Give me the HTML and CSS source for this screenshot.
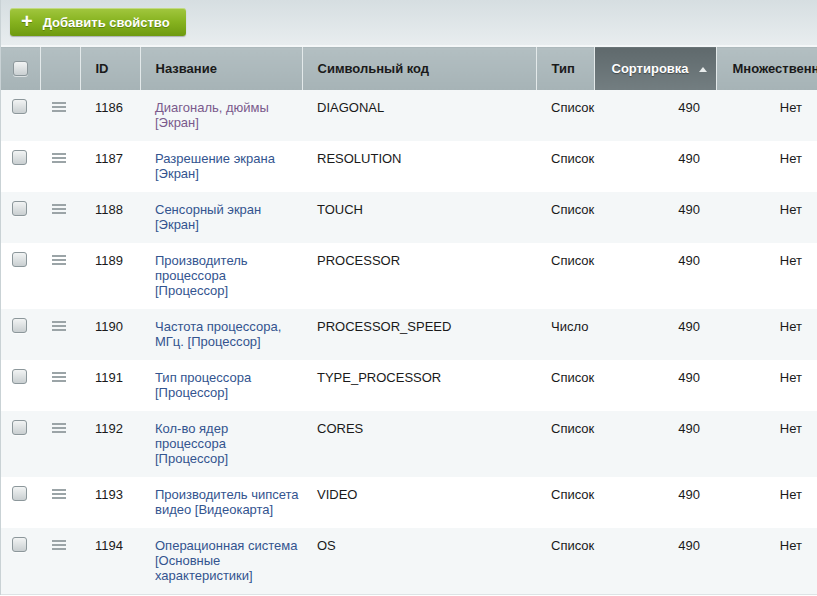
FILE: index.html
```html
<!DOCTYPE html>
<html lang="ru">
<head>
<meta charset="utf-8">
<title>Свойства</title>
<link rel="stylesheet" href="styles.css">
</head>
<body>
<div class="page">
  <div class="toolbar">
    <span class="btn-add"><span class="btn-plus">+</span>Добавить свойство</span>
  </div>
  <table class="list">
    <colgroup>
      <col class="c-chk"><col class="c-drag"><col class="c-id"><col class="c-name"><col class="c-code"><col class="c-type"><col class="c-sort"><col class="c-mult">
    </colgroup>
    <thead>
      <tr>
        <th class="chk"><span class="checkbox"></span></th>
        <th></th>
        <th>ID</th>
        <th>Название</th>
        <th>Символьный код</th>
        <th>Тип</th>
        <th class="sorted">Сортировка <span class="arrow"></span></th>
        <th class="mult">Множественное</th>
      </tr>
    </thead>
    <tbody>
      <tr class="odd">
        <td class="chk"><span class="checkbox"></span></td>
        <td class="drag"><span class="handle"></span></td>
        <td>1186</td>
        <td class="name"><a class="visited">Диагональ, дюймы [Экран]</a></td>
        <td>DIAGONAL</td>
        <td>Список</td>
        <td class="num">490</td>
        <td class="num">Нет</td>
      </tr>
      <tr>
        <td class="chk"><span class="checkbox"></span></td>
        <td class="drag"><span class="handle"></span></td>
        <td>1187</td>
        <td class="name"><a>Разрешение экрана [Экран]</a></td>
        <td>RESOLUTION</td>
        <td>Список</td>
        <td class="num">490</td>
        <td class="num">Нет</td>
      </tr>
      <tr class="odd">
        <td class="chk"><span class="checkbox"></span></td>
        <td class="drag"><span class="handle"></span></td>
        <td>1188</td>
        <td class="name"><a>Сенсорный экран [Экран]</a></td>
        <td>TOUCH</td>
        <td>Список</td>
        <td class="num">490</td>
        <td class="num">Нет</td>
      </tr>
      <tr>
        <td class="chk"><span class="checkbox"></span></td>
        <td class="drag"><span class="handle"></span></td>
        <td>1189</td>
        <td class="name"><a>Производитель процессора [Процессор]</a></td>
        <td>PROCESSOR</td>
        <td>Список</td>
        <td class="num">490</td>
        <td class="num">Нет</td>
      </tr>
      <tr class="odd">
        <td class="chk"><span class="checkbox"></span></td>
        <td class="drag"><span class="handle"></span></td>
        <td>1190</td>
        <td class="name"><a>Частота процессора, МГц. [Процессор]</a></td>
        <td>PROCESSOR_SPEED</td>
        <td>Число</td>
        <td class="num">490</td>
        <td class="num">Нет</td>
      </tr>
      <tr>
        <td class="chk"><span class="checkbox"></span></td>
        <td class="drag"><span class="handle"></span></td>
        <td>1191</td>
        <td class="name"><a>Тип процессора [Процессор]</a></td>
        <td>TYPE_PROCESSOR</td>
        <td>Список</td>
        <td class="num">490</td>
        <td class="num">Нет</td>
      </tr>
      <tr class="odd">
        <td class="chk"><span class="checkbox"></span></td>
        <td class="drag"><span class="handle"></span></td>
        <td>1192</td>
        <td class="name"><a>Кол-во ядер процессора [Процессор]</a></td>
        <td>CORES</td>
        <td>Список</td>
        <td class="num">490</td>
        <td class="num">Нет</td>
      </tr>
      <tr>
        <td class="chk"><span class="checkbox"></span></td>
        <td class="drag"><span class="handle"></span></td>
        <td>1193</td>
        <td class="name"><a>Производитель чипсета видео [Видеокарта]</a></td>
        <td>VIDEO</td>
        <td>Список</td>
        <td class="num">490</td>
        <td class="num">Нет</td>
      </tr>
      <tr class="odd">
        <td class="chk"><span class="checkbox"></span></td>
        <td class="drag"><span class="handle"></span></td>
        <td>1194</td>
        <td class="name"><a>Операционная система [Основные характеристики]</a></td>
        <td>OS</td>
        <td>Список</td>
        <td class="num">490</td>
        <td class="num">Нет</td>
      </tr>
    </tbody>
  </table>
</div>
</body>
</html>
```
FILE: styles.css
```css
html, body {
  margin: 0;
  padding: 0;
  background: #ffffff;
  overflow: hidden;
}
body {
  font-family: "Liberation Sans", Arial, sans-serif;
  font-size: 13px;
  color: #000;
}
.page {
  width: 818px;
  border-left: 1px solid #c9d2d5;
}
.toolbar {
  height: 46px;
  box-sizing: border-box;
  padding: 8px 0 0 9px;
  background: linear-gradient(#d6dee1, #e8edef);
  border-bottom: 1px solid #f4f7f8;
}
.btn-add {
  display: inline-flex;
  align-items: center;
  height: 28px;
  box-sizing: border-box;
  padding: 0 16px 0 11px;
  border-radius: 3px;
  background: linear-gradient(#a2c73f, #86b21f 50%, #6e9a10);
  box-shadow: 0 1px 1px rgba(0,0,0,0.25), inset 0 1px 0 rgba(255,255,255,0.35);
  color: #fff;
  font-weight: bold;
  font-size: 13px;
  text-shadow: 0 1px 0 rgba(60,90,0,0.5);
}
.btn-plus {
  font-size: 20px;
  line-height: 20px;
  margin-right: 10px;
  margin-top: -2px;
}
.list {
  border-collapse: collapse;
  table-layout: fixed;
  width: 817px;
}
.c-chk { width: 39px; }
.c-drag { width: 40px; }
.c-id { width: 60px; }
.c-name { width: 162px; }
.c-code { width: 234px; }
.c-type { width: 58px; }
.c-sort { width: 122px; }
.c-mult { width: 102px; }
thead th {
  height: 43px;
  box-sizing: border-box;
  padding: 0 15px;
  text-align: left;
  font-weight: bold;
  color: #1a1a1a;
  background: linear-gradient(#b3bfc2, #a6b3b6);
  border-left: 1px solid #e3e9ea;
  border-top: 1px solid #f4f7f8;
  white-space: nowrap;
  overflow: hidden;
  vertical-align: middle;
}
thead th:first-child { border-left: none; }
thead th.chk { padding: 0; text-align: center; }
thead th.sorted {
  background: linear-gradient(#5f696c, #737e81);
  color: #fff;
  text-shadow: 0 1px 1px rgba(0,0,0,0.4);
  padding-left: 17px;
}
thead th.mult { padding: 0 0 0 16px; }
.arrow {
  display: inline-block;
  width: 0;
  height: 0;
  margin-left: 7px;
  vertical-align: 1px;
  border-left: 4px solid transparent;
  border-right: 4px solid transparent;
  border-bottom: 5px solid #e8ecec;
}
tbody td {
  padding: 10px 15px 11px;
  line-height: 15px;
  vertical-align: top;
  color: #1a1a1a;
  background: #ffffff;
}
tbody tr.odd td { background: #f4f7f8; }
tbody tr:last-child td { border-bottom: 1px solid #dde3e5; }
td.chk { padding: 9px 0 0 11px; }
td.drag { padding: 10px 0 0 12px; }
td.name { padding-right: 2px; }
td.num { text-align: right; padding-right: 16px; }
a {
  color: #33548f;
  text-decoration: none;
}
a.visited { color: #7a5a8c; }
.checkbox {
  display: inline-block;
  width: 15px;
  height: 15px;
  box-sizing: border-box;
  border: 1px solid #8c979b;
  border-radius: 3px;
  background: linear-gradient(#f2f4f4, #c9cfd1);
  box-shadow: 0 1px 0 rgba(255,255,255,0.6);
  vertical-align: middle;
}
td.chk .checkbox { display: block; }
.handle {
  display: block;
  width: 14px;
  height: 10px;
  margin-top: 2px;
  background: linear-gradient(#9ba4a7 0 2px, transparent 2px 4px, #9ba4a7 4px 6px, transparent 6px 8px, #9ba4a7 8px 10px);
}
```
